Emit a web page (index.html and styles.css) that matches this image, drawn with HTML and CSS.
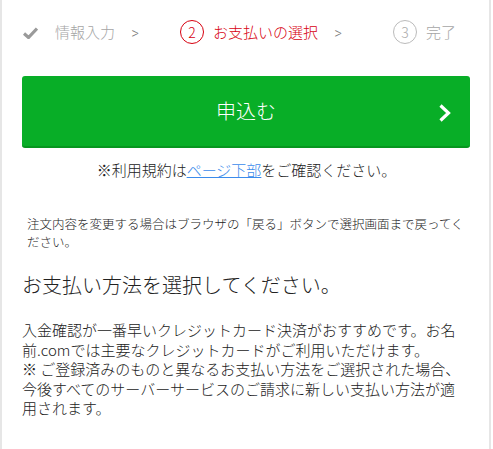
FILE: index.html
```html
<!DOCTYPE html>
<html lang="ja">
<head>
<meta charset="utf-8">
<link rel="stylesheet" href="styles.css">
</head>
<body>
<div class="page">
  <ol class="steps">
    <li class="step step-done">
      <svg class="check" width="15" height="12" viewBox="0 0 15 12"><path d="M1 6.5 L5.5 10.5 L14 1.5" fill="none" stroke="#9a9a9a" stroke-width="3.2" stroke-linejoin="miter"/></svg>
      <span class="step-label">情報入力</span>
      <span class="sep">&gt;</span>
    </li>
    <li class="step step-current">
      <span class="num">2</span>
      <span class="step-label">お支払いの選択</span>
      <span class="sep">&gt;</span>
    </li>
    <li class="step step-todo">
      <span class="num">3</span>
      <span class="step-label">完了</span>
    </li>
  </ol>

  <button class="apply" type="button">
    <span class="apply-text">申込む</span>
    <svg class="apply-arrow" width="14" height="18" viewBox="0 0 14 18"><path d="M2.5 1.5 L10.5 9 L2.5 16.5" fill="none" stroke="#fff" stroke-width="3.2"/></svg>
  </button>

  <p class="terms">※利用規約は<a href="#">ページ下部</a>をご確認ください。</p>

  <p class="notice">注文内容を変更する場合はブラウザの「戻る」ボタンで選択画面まで戻ってください。</p>

  <h2 class="title">お支払い方法を選択してください。</h2>

  <p class="desc">入金確認が一番早いクレジットカード決済がおすすめです。お名前.comでは主要なクレジットカードがご利用いただけます。<br>※ ご登録済みのものと異なるお支払い方法をご選択された場合、今後すべてのサーバーサービスのご請求に新しい支払い方法が適用されます。</p>
</div>
</body>
</html>
```
FILE: styles.css
```css
* { box-sizing: border-box; }
html, body { margin: 0; padding: 0; background: #fff; }
body {
  font-family: "Noto Sans CJK JP", "Noto Sans", sans-serif;
  font-weight: 300;
  color: #222;
}
.page {
  width: 491px;
  height: 449px;
  border-left: 2px solid #e6e6e6;
  border-right: 2px solid #e6e6e6;
  padding: 0 18px 0 20px;
}
.steps {
  list-style: none;
  margin: 0;
  padding: 20px 0 0 1px;
  display: flex;
  align-items: flex-start;
  height: 76px;
}
.step {
  display: flex;
  align-items: center;
  height: 24px;
  font-size: 15px;
  line-height: 24px;
}
.step-done { width: 157px; color: #a5a5a5; }
.step-current { width: 213px; color: #d7000f; }
.step-todo { color: #a5a5a5; }
.check { margin-right: 17px; margin-top: 1px; }
.num {
  width: 24px;
  height: 24px;
  border-radius: 50%;
  border: 1.5px solid currentColor;
  display: flex;
  align-items: center;
  justify-content: center;
  font-size: 14px;
  margin-right: 9px;
}
.step-todo .num { border-color: #bbb; color: #aaa; }
.sep {
  color: #777;
  font-size: 16px;
  margin-left: 16px;
  transform: scaleX(0.8);
}
.apply {
  display: block;
  position: relative;
  width: 448px;
  height: 72px;
  margin: 0;
  border: 0;
  border-bottom: 2px solid #07961f;
  border-radius: 3px;
  background: #08ae27;
  color: #fff;
  font-family: inherit;
  font-weight: 300;
  font-size: 20px;
  cursor: pointer;
  padding: 0;
}
.apply-text { display: block; line-height: 68px; }
.apply-arrow { position: absolute; right: 18px; top: 28px; }
.terms {
  margin: 11px 0 0;
  text-align: center;
  font-size: 15px;
  line-height: 22px;
}
.terms a { color: #3b8beb; text-decoration: underline; }
.notice {
  margin: 34px 0 0 5px;
  max-width: 440px;
  font-size: 12.5px;
  line-height: 18px;
}
.title {
  margin: 20px 0 0;
  font-size: 20px;
  font-weight: 300;
  line-height: 28px;
}
.desc {
  margin: 21px 0 0;
  max-width: 440px;
  font-size: 15px;
  line-height: 19.5px;
}
```
